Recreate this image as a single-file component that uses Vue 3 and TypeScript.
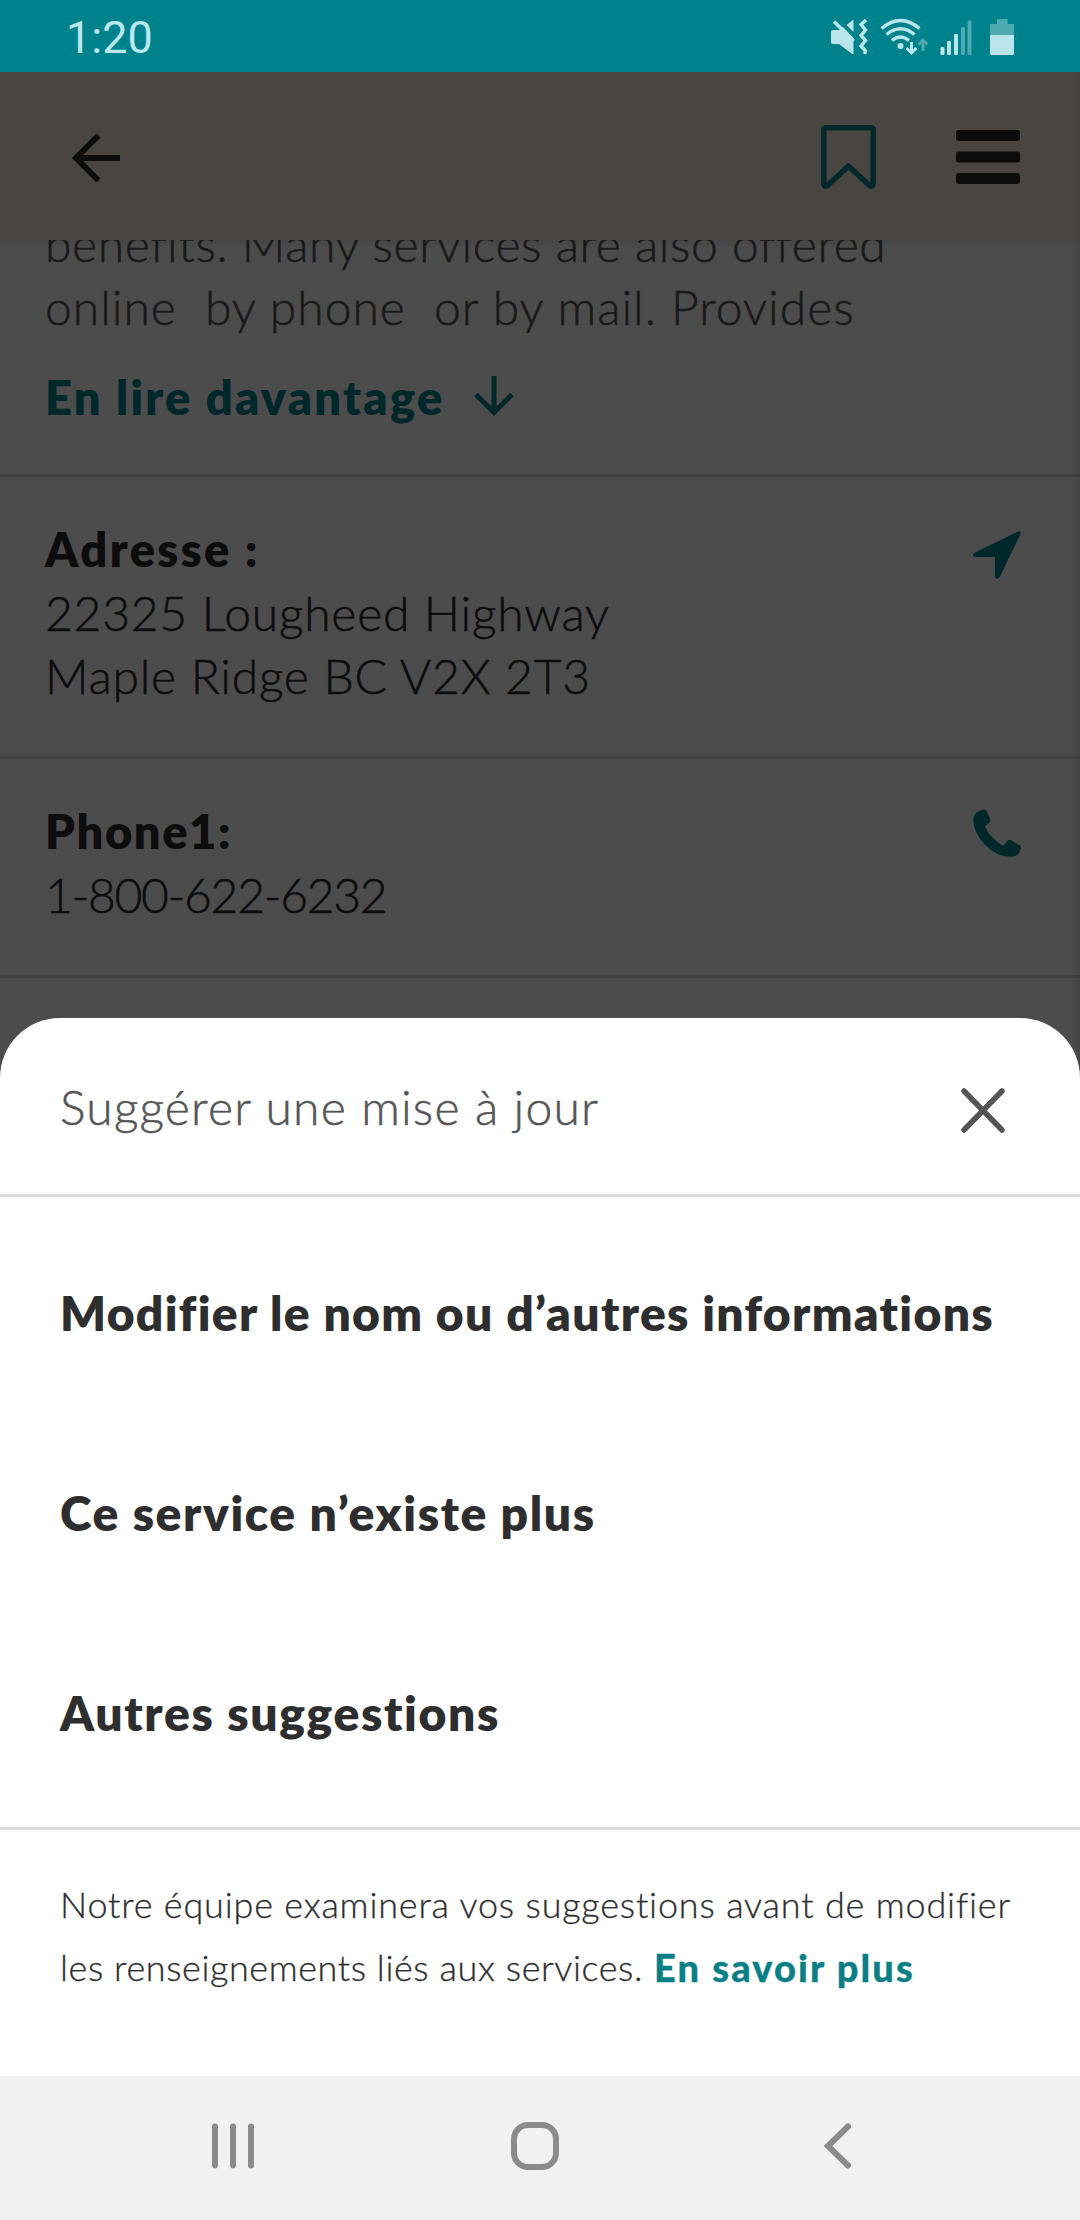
<script setup lang="ts">
interface Line {
  text: string
  spacing: number
}

interface Suggestion extends Line {
  id: string
}

const description: Line[] = [
  { text: 'benefits. Many services are also offered', spacing: 0.59 },
  { text: 'online  by phone  or by mail. Provides', spacing: 1 },
]

const address: Line[] = [
  { text: '22325 Lougheed Highway', spacing: 0.74 },
  { text: 'Maple Ridge BC V2X 2T3', spacing: 0.76 },
]

const suggestions: Suggestion[] = [
  { id: 'edit', text: 'Modifier le nom ou d’autres informations', spacing: 1.31 },
  { id: 'closed', text: 'Ce service n’existe plus', spacing: 1.58 },
  { id: 'other', text: 'Autres suggestions', spacing: 1.65 },
]

const ls = (line: Line) => ({ letterSpacing: `${line.spacing}px` })
</script>

<template>
  <div class="screen">
    <header class="status">
      <span class="clock">1:20</span>
      <svg class="status-icons" width="190" height="48" viewBox="828 12 190 48" aria-hidden="true">
        <g fill="#b9e6ea">
          <path d="M833 30h6.500l3.500-3L853.500 38v14.500q0 2.500-2 1L839 44h-6q-2 0-2-2V32q0-2 2-2Z" />
          <path d="M853.500 19.500V32L846.500 25Z" />
          <path d="m834 21.500 19.500 19.500" fill="none" stroke="#b9e6ea" stroke-width="3.600" />
          <path d="m866 20-5 4.500 4.500 5.500-4.500 5.500 4.500 5-4.500 5.500 4.500 5-1 3" fill="none" stroke="#b9e6ea" stroke-width="3.400" />
          <circle cx="900.500" cy="46" r="3" />
        </g>
        <g fill="none" stroke="#b9e6ea" stroke-width="3.400">
          <path d="M881.500 28.500q19-16 38 0" />
          <path d="M886.500 34.500q14-11.500 28 0" />
          <path d="M892 40.500q8.500-7 17 0" />
          <path d="M911.500 42v10M906.500 48l5 5 5-5" stroke-width="3" />
          <path d="M923 51V40M918.500 44.500l4.500-4.500 4.500 4.500" stroke="#4daab1" stroke-width="3" />
        </g>
        <g fill="#b9e6ea">
          <rect x="940.500" y="47" width="4" height="8" rx="1" />
          <rect x="947" y="41" width="4" height="14" rx="1" />
          <rect x="954" y="34" width="4" height="21" rx="1" />
          <rect x="961" y="27" width="4" height="28" rx="1" fill="#4daab1" />
          <rect x="967.500" y="20.500" width="4" height="34.500" rx="1" fill="#4daab1" />
          <path d="M997 19h10.500v5h6.500v11.500h-24V24h7Z" fill="#4daab1" />
          <path d="M990 35h24v18.500q0 1.500-1.500 1.500h-21q-1.500 0-1.500-1.500Z" />
        </g>
      </svg>
    </header>

    <main class="stage">
      <div class="toolbar">
        <svg width="48" height="48" viewBox="0 0 48 48" fill="none" stroke="#2e2e2e" stroke-width="6">
          <path d="M48 24H4M26.500 1.500 4 24l22.500 22.500" />
        </svg>
        <div class="actions">
          <svg width="55" height="64" viewBox="0 0 55 64" fill="none" stroke="#0a8791" stroke-width="5.500" stroke-linejoin="round">
            <path d="M5 2.800h45q2.200 0 2.200 2.200v53.500q0 3.500-3.500 2.200L27.500 41 6.300 60.700q-3.500 1.300-3.500-2.200V5q0-2.200 2.200-2.200Z" />
          </svg>
          <svg width="64" height="54" viewBox="0 0 64 54" fill="#2a2a2a">
            <rect width="64" height="11" rx="2.500" />
            <rect y="21.500" width="64" height="11" rx="2.500" />
            <rect y="43" width="64" height="11" rx="2.500" />
          </svg>
        </div>
      </div>

      <div class="content">
        <section class="block intro">
          <p v-for="line in description" :key="line.text" class="line muted" :style="ls(line)">{{ line.text }}</p>
          <a class="more">
            <span>En lire davantage</span>
            <svg width="40" height="40" viewBox="0 0 40 40" fill="none" stroke="#00828c" stroke-width="5">
              <path d="M20 0v36M2 18.500l18 18 18-18" />
            </svg>
          </a>
        </section>
        <section class="block address">
          <div>
            <h3 class="label address-label">Adresse :</h3>
            <p v-for="line in address" :key="line.text" class="line" :style="ls(line)">{{ line.text }}</p>
          </div>
          <svg width="48" height="48" viewBox="0 0 48 48" fill="#00828c">
            <path d="M45 .4q3.400-1 2.600 2.400L27 45.500q-1.200 2.300-3 2.200-2-.2-2-2.700V26H3q-2.700 0-3-1.900-.2-1.600 2-2.700Z" />
          </svg>
        </section>
        <section class="block phone">
          <div>
            <h3 class="label phone-label">Phone1:</h3>
            <p class="line number">1-800-622-6232</p>
          </div>
          <svg width="48" height="48" viewBox="0 0 48 48" fill="#00828c">
            <path d="M10.500.5Q12.500 0 13.500 2L17.300 10q.8 2-.8 3.500l-4.500 4q1.500 4.500 5.500 8.800 4.500 5 10.500 9.700 1.800 1 3.500-.5l3-3.600q1.500-1.800 3.600-.7l8.200 5q2 1 1.500 3.500-1.500 8-10 8.100-15-.3-26-12.300Q0 23 .3 10.500.8 2.500 10.500.5Z" />
          </svg>
        </section>
      </div>

      <div class="scrim"></div>

      <section class="sheet">
        <div class="sheet-head">
          <h2>Suggérer une mise à jour</h2>
          <svg width="44" height="45" viewBox="0 0 44 45" fill="none" stroke="#555" stroke-width="5.500" stroke-linecap="round">
            <path d="m3 3 38 39M41 3 3 42" />
          </svg>
        </div>
        <ul class="options">
          <li v-for="s in suggestions" :key="s.id" :style="ls(s)">{{ s.text }}</li>
        </ul>
        <div class="note">
          <p class="note-first">Notre équipe examinera vos suggestions avant de modifier</p>
          <p class="note-second"><span>les renseignements liés aux services.</span><a>En savoir plus</a></p>
        </div>
      </section>
    </main>

    <nav class="navbar">
      <svg width="1080" height="144" viewBox="0 0 1080 144" fill="none" stroke="#8b8b8b" stroke-width="6" stroke-linecap="round">
        <path d="M215 50.500v39M233 50.500v39M251 50.500v39" />
        <rect x="514" y="49" width="42" height="42" rx="14" />
        <path d="M848 50.500 828 70l20 19.500" />
      </svg>
    </nav>
  </div>
</template>

<style>
body {
  margin: 0;
}
</style>

<style scoped>
.screen {
  display: flex;
  flex-direction: column;
  width: 1080px;
  height: 2220px;
  overflow: hidden;
  background: #fff;
  font-family: Lato, "Noto Sans", sans-serif;
}

p,
h2,
h3,
ul {
  margin: 0;
  padding: 0;
}

svg {
  display: block;
  flex: none;
}

.status {
  display: flex;
  align-items: center;
  justify-content: space-between;
  box-sizing: border-box;
  height: 72px;
  padding: 0 62px 0 66px;
  background: #00828d;
}

.clock {
  padding-top: 4px;
  color: #b9e9ee;
  font: 400 45px/50px Roboto, sans-serif;
}

.stage {
  position: relative;
  display: flex;
  flex: 1;
  flex-direction: column;
  min-height: 0;
  overflow: hidden;
}

.toolbar {
  display: flex;
  align-items: center;
  justify-content: space-between;
  flex: none;
  box-sizing: border-box;
  height: 168px;
  padding: 4px 60px 0 72px;
  background: #f6e6d9;
}

.actions {
  display: flex;
  align-items: center;
  gap: 80.500px;
  padding-bottom: 2px;
}

.content {
  flex: 1;
  overflow: hidden;
  background: linear-gradient(#ececec, #fff 8px);
}

.block {
  display: flex;
  justify-content: space-between;
  box-sizing: border-box;
  padding: 0 59px 0 45px;
  border-bottom: 3px solid #dcdcdc;
}

.intro {
  flex-direction: column;
  justify-content: flex-start;
  height: 237px;
}

.line {
  height: 63px;
  color: #2c2c2c;
  font-size: 48px;
  font-weight: 300;
  line-height: 63px;
  white-space: pre;
  -webkit-text-stroke: 0.5px currentColor;
}

.intro .line:first-child {
  margin-top: -28px;
}

.muted {
  color: #555;
}

.more {
  display: flex;
  align-items: center;
  gap: 30px;
  height: 63px;
  margin-top: 27px;
  color: #00828c;
  font-size: 47px;
  font-weight: 800;
  letter-spacing: 2.25px;
  white-space: pre;
}

.more svg {
  margin-bottom: 2px;
}

.address {
  height: 282px;
  padding-top: 41px;
}

.address > svg {
  margin-top: 13px;
}

.phone {
  height: 219px;
  padding-top: 41px;
}

.phone > svg {
  margin-top: 9px;
}

.label {
  height: 63px;
  color: #2c2c2c;
  font-size: 47px;
  font-weight: 800;
  line-height: 63px;
  white-space: pre;
}

.address-label {
  letter-spacing: 2.4px;
}

.phone-label {
  letter-spacing: 1.6px;
}

.number {
  letter-spacing: -1.3px;
}

.scrim {
  position: absolute;
  inset: 0;
  background: linear-gradient(to left, rgba(0, 0, 0, 0.1), transparent 8px), rgba(0, 0, 0, 0.7);
}

.sheet {
  position: absolute;
  right: 0;
  bottom: 0;
  left: 0;
  display: flex;
  flex-direction: column;
  height: 1058px;
  border-radius: 60px 60px 0 0;
  background: #fff;
  color: #2e2e2e;
}

.sheet-head {
  display: flex;
  align-items: center;
  justify-content: space-between;
  box-sizing: border-box;
  height: 179px;
  padding: 8px 75px 0 60px;
  border-bottom: 3px solid #dadada;
}

h2 {
  padding-bottom: 8px;
  color: #555;
  font-size: 48px;
  font-weight: 300;
  letter-spacing: 1.2px;
  line-height: 63px;
  white-space: pre;
  -webkit-text-stroke: 0.5px currentColor;
}

.options {
  box-sizing: border-box;
  height: 633px;
  padding: 16px 0 0 60px;
  border-bottom: 3px solid #dadada;
  list-style: none;
}

.options li {
  height: 200px;
  font-size: 48px;
  font-weight: 800;
  line-height: 200px;
  white-space: pre;
}

.note {
  padding: 43px 0 0 60px;
  font-size: 36px;
  font-weight: 300;
  letter-spacing: 0.81px;
  line-height: 63px;
  white-space: pre;
  -webkit-text-stroke: 0.3px currentColor;
}

.note-second {
  display: flex;
  gap: 11px;
  letter-spacing: 0.58px;
}

.note a {
  color: #0a7f86;
  font-size: 38px;
  font-weight: 900;
  letter-spacing: 2.1px;
}

.navbar {
  height: 144px;
  background: #f1f1f1;
}
</style>
